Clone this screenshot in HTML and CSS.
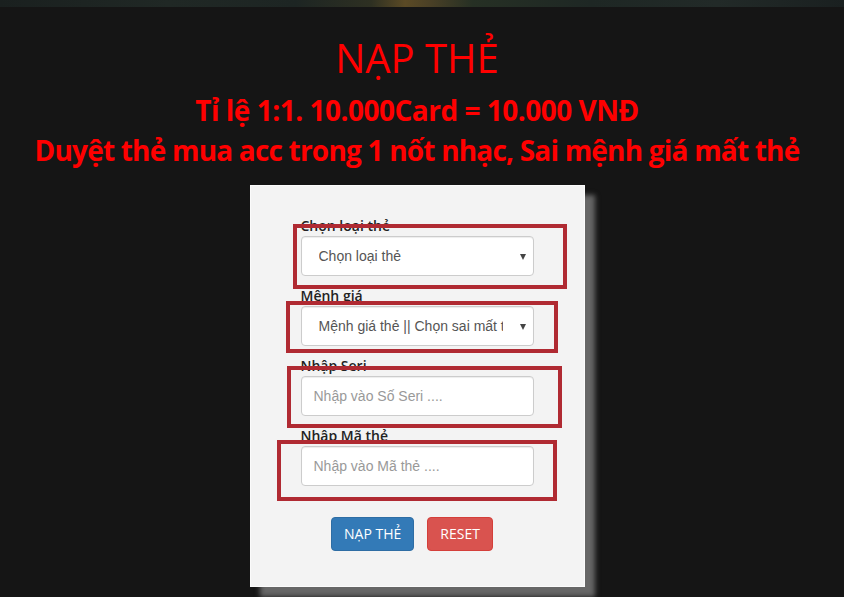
FILE: index.html
```html
<!DOCTYPE html>
<html lang="vi">
<head>
<meta charset="utf-8">
<title>Nạp thẻ</title>
<link rel="stylesheet" href="styles.css">
</head>
<body>
<div class="banner"></div>
<main class="page">
  <header class="intro">
    <h1 class="title">NẠP THẺ</h1>
    <h2 class="rate">Tỉ lệ 1:1. 10.000Card = 10.000 VNĐ</h2>
    <h2 class="rate rate-tight">Duyệt thẻ mua acc trong 1 nốt nhạc, Sai mệnh giá mất thẻ</h2>
  </header>
  <form class="card">
    <div class="group">
      <label class="label">Chọn loại thẻ</label>
      <div class="select-wrap"><select class="control select"><option>Chọn loại thẻ</option></select></div>
    </div>
    <div class="group">
      <label class="label">Mệnh giá</label>
      <div class="select-wrap"><select class="control select"><option>Mệnh giá thẻ || Chọn sai mất thẻ</option></select></div>
    </div>
    <div class="group">
      <label class="label">Nhập Seri</label>
      <input class="control input" type="text" placeholder="Nhập vào Số Seri ....">
    </div>
    <div class="group">
      <label class="label">Nhập Mã thẻ</label>
      <input class="control input" type="text" placeholder="Nhập vào Mã thẻ ....">
    </div>
    <div class="actions">
      <button type="button" class="btn btn-primary">NẠP THẺ</button>
      <button type="reset" class="btn btn-danger">RESET</button>
    </div>
    <span class="mark mark-1"></span>
    <span class="mark mark-2"></span>
    <span class="mark mark-3"></span>
    <span class="mark mark-4"></span>
  </form>
</main>
</body>
</html>
```
FILE: styles.css
```css
* { box-sizing: border-box; }
html, body { margin: 0; padding: 0; }
body {
  background: #151515;
  font-family: "Open Sans", "Noto Sans", sans-serif;
  height: 597px;
  overflow: hidden;
}
.banner {
  height: 7px;
  background: linear-gradient(90deg, #1a201f 0%, #202825 20%, #1d2523 35%, #2e3022 44%, #5b4a25 48%, #4a4026 51%, #263024 56%, #1e2724 70%, #222a28 85%, #1a2020 100%);
}
.page {
  padding-right: 10px;
}
.intro {
  text-align: center;
  color: #ff0000;
  padding-top: 26px;
}
.title {
  margin: 0;
  font-size: 40px;
  font-weight: 400;
  line-height: 50px;
}
.rate {
  margin: 0;
  font-size: 28px;
  font-weight: 700;
  line-height: 40px;
  letter-spacing: -0.5px;
}
.rate-tight { letter-spacing: -0.8px; }
.title + .rate { margin-top: 7px; }
.card {
  position: relative;
  width: 335px;
  margin: 15px auto 0;
  padding: 30px 50px 35px;
  background: #f3f3f3;
  border: 1px solid #fbfbfb;
  box-shadow: 10px 10px 5px #666;
}
.group { margin-bottom: 10px; }
.label {
  display: block;
  font-size: 14px;
  font-weight: 600;
  line-height: 20px;
  color: #222;
}
.control {
  display: block;
  width: 233px;
  height: 40px;
  margin: 0;
  border: 1px solid #ccc;
  border-radius: 4px;
  background: #fff;
  font-family: "Liberation Sans", Arial, sans-serif;
  font-size: 14px;
  color: #555;
  box-shadow: inset 0 1px 1px rgba(0,0,0,.075);
}
.input { padding: 0 12px; }
.input::placeholder { color: #999; }
.select-wrap { position: relative; }
.select {
  appearance: none;
  -webkit-appearance: none;
  padding: 0 30px 0 17px;
}
.select-wrap::after {
  content: "";
  position: absolute;
  right: 8px;
  top: 18px;
  border-left: 3.5px solid transparent;
  border-right: 3.5px solid transparent;
  border-top: 6px solid #444;
}
.actions {
  display: flex;
  justify-content: center;
  gap: 13px;
  padding-right: 10px;
  margin-top: 31px;
}
.btn {
  height: 34px;
  padding: 0 12px;
  border: 1px solid transparent;
  border-radius: 4px;
  font-family: "Open Sans", "Noto Sans", sans-serif;
  font-size: 14px;
  color: #fff;
  line-height: 32px;
}
.btn-primary { background: #337ab7; border-color: #2e6da4; }
.btn-danger { background: #d9534f; border-color: #d43f3a; }
.mark {
  position: absolute;
  border: 4px solid #b02a32;
  pointer-events: none;
}
.mark-1 { left: 42px; top: 38px; width: 274px; height: 65px; }
.mark-2 { left: 35px; top: 115px; width: 272px; height: 52px; }
.mark-3 { left: 36px; top: 180px; width: 275px; height: 62px; }
.mark-4 { left: 26px; top: 254px; width: 280px; height: 61px; }
```
